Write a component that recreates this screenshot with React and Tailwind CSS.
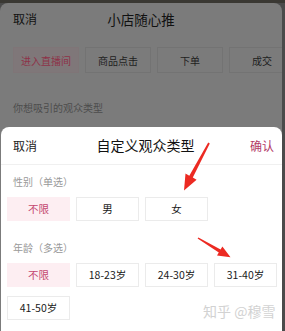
import React from "react";

const font = { fontFamily: '"Noto Sans CJK SC", "Noto Sans", sans-serif' };

const topTabs = [
  { label: "进入直播间", active: true },
  { label: "商品点击" },
  { label: "下单" },
  { label: "成交" },
];

function Chip({ label, active }) {
  return (
    <div
      className={
        "flex h-[24px] w-[63px] shrink-0 items-center justify-center text-[10.5px] " +
        (active
          ? "bg-[#fdeef2] text-[#c4476f]"
          : "border border-[#ebebeb] bg-white text-[#1a1a1a]")
      }
    >
      {label}
    </div>
  );
}

function Arrows() {
  return (
    <svg
      className="pointer-events-none absolute left-0 top-0"
      width="285"
      height="331"
      viewBox="0 0 285 331"
    >
      <polygon
        fill="#ec2a22"
        points="209.8,143.4 192.8,177.6 196.6,179.8 184,190.5 185.5,173.6 189.3,175.8 208.2,142.6"
      />
      <polygon
        fill="#ec2a22"
        points="197.6,238.6 218.8,252.4 217,255.4 230.5,257.3 222.4,246.4 220.6,249.4 198.4,237.4"
      />
    </svg>
  );
}

export default function App() {
  return (
    <div className="relative h-[331px] w-[285px] overflow-hidden bg-[#4b4b4b]" style={font}>
      <div className="h-[3px] bg-[#3a3833]" />

      {/* page under the sheet, dimmed */}
      <div className="mr-[3px] h-[328px] rounded-t-[8px] bg-[#7b7b7b]">
        <div className="relative flex h-[32px] items-center px-[13px]">
          <span className="text-[12px] text-[#111111]">取消</span>
          <span className="absolute left-0 right-0 text-center text-[13.5px] text-[#111111]">
            小店随心推
          </span>
        </div>
        <div className="mt-[12px] flex gap-[6px] overflow-hidden pl-[13px]">
          {topTabs.map((t) => (
            <div
              key={t.label}
              className={
                "flex h-[26px] w-[66px] shrink-0 items-center justify-center border text-[10px] " +
                (t.active
                  ? "border-[#7f7577] bg-[#7f7779] text-[#8e3248]"
                  : "border-[#737373] text-[#1e1e1e]")
              }
            >
              {t.label}
            </div>
          ))}
        </div>
        <div className="mt-[28px] pl-[13px] text-[10px] leading-[14px] text-[#4d4d4d]">
          你想吸引的观众类型
        </div>
      </div>

      {/* bottom sheet */}
      <div className="absolute bottom-0 left-[1px] right-[3px] top-[127px] rounded-t-[8px] bg-white">
        <div className="flex h-[38px] items-center border-b border-[#f0f0f0] pl-[12px] pr-[8px]">
          <span className="w-[40px] text-[12px] text-[#222222]">取消</span>
          <span className="flex-1 pl-[4px] text-center text-[14px] text-[#111111]">自定义观众类型</span>
          <span className="w-[40px] text-right text-[12px] text-[#b23a66]">确认</span>
        </div>

        <div className="mt-[10px] pl-[12px] text-[10px] leading-[14px] text-[#999999]">性别（单选）</div>
        <div className="mt-[8px] flex gap-[6px] pl-[6px]">
          <Chip label="不限" active />
          <Chip label="男" />
          <Chip label="女" />
        </div>

        <div className="mt-[20px] pl-[12px] text-[10px] leading-[14px] text-[#999999]">年龄（多选）</div>
        <div className="mt-[8px] flex gap-[6px] pl-[6px]">
          <Chip label="不限" active />
          <Chip label="18-23岁" />
          <Chip label="24-30岁" />
          <Chip label="31-40岁" />
        </div>
        <div className="mt-[9px] flex gap-[6px] pl-[6px]">
          <Chip label="41-50岁" />
        </div>
      </div>

      <div
        className="absolute left-[203px] top-[302px] text-[14px] leading-[18px] text-[#d2d2d2]"
        style={{ textShadow: "0 0 1px #ffffff" }}
      >
        知乎 @穆雪
      </div>

      <Arrows />
    </div>
  );
}
